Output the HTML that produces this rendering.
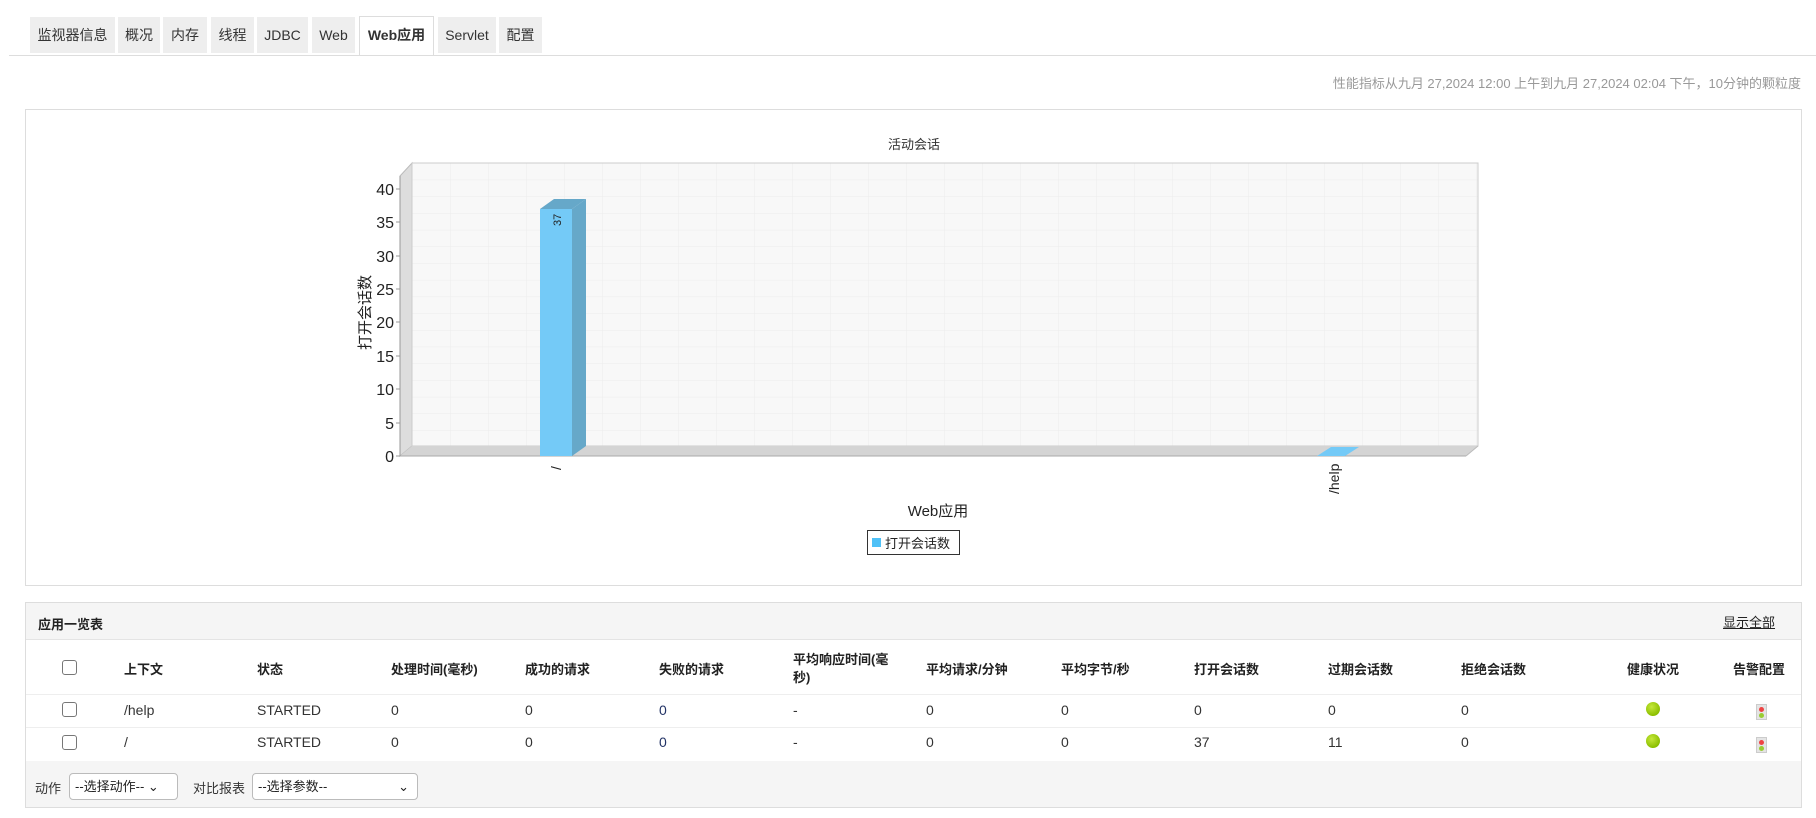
<!DOCTYPE html>
<html><head><meta charset="utf-8"><style>
*{margin:0;padding:0;box-sizing:border-box}
body{width:1816px;height:818px;background:#fff;font-family:"Liberation Sans","Noto Sans CJK SC",sans-serif;color:#333;position:relative;overflow:hidden;font-size:14px}
.a{position:absolute;white-space:nowrap}
.tab{position:absolute;top:17px;height:36px;background:#eee;line-height:36px;text-align:center;font-size:14px;color:#333}
.tab.act{background:#fff;border:1px solid #ddd;border-bottom:none;font-weight:bold;height:39px;top:16px}
.th{font-weight:bold;font-size:13px;color:#222}
.cb{position:absolute;width:15px;height:15px;border:1px solid #777;border-radius:3px;background:#fff}
.sel{position:absolute;height:27px;border:1px solid #bbb;border-radius:4px;background:#fff;font-size:13px;line-height:25px;padding-left:5px;color:#222}
.dot{position:absolute;width:14px;height:14px;border-radius:50%;background:radial-gradient(circle at 40% 35%,#c5e83a,#8cbf00 70%)}
.al{position:absolute;width:11px;height:16px;background:#e4e4e4;border:1px solid #ccc}
.al:before{content:"";position:absolute;left:2px;top:2px;width:5px;height:5px;border-radius:50%;background:#e44}
.al:after{content:"";position:absolute;left:2px;top:8px;width:5px;height:5px;border-radius:50%;background:#9c3}
</style></head><body>
<div class="tab" style="left:30px;width:85px">监视器信息</div>
<div class="tab" style="left:118px;width:42px">概况</div>
<div class="tab" style="left:163px;width:44px">内存</div>
<div class="tab" style="left:211px;width:43px">线程</div>
<div class="tab" style="left:257px;width:51px">JDBC</div>
<div class="tab" style="left:312px;width:43px">Web</div>
<div class="tab act" style="left:359px;width:75px">Web应用</div>
<div class="tab" style="left:438px;width:58px">Servlet</div>
<div class="tab" style="left:499px;width:43px">配置</div>
<div class="a" style="left:9px;top:55px;width:1807px;height:1px;background:#ddd"></div>
<div class="a" style="right:15px;top:73px;font-size:13px;color:#999">性能指标从九月 27,2024 12:00 上午到九月 27,2024 02:04 下午，10分钟的颗粒度</div>

<div class="a" style="left:25px;top:109px;width:1777px;height:477px;border:1px solid #ddd"></div>
<svg class="a" style="left:0;top:0" width="1816" height="600" font-family="Liberation Sans,Noto Sans CJK SC,sans-serif">
<defs><pattern id="g" x="412" y="163" width="38" height="16.7" patternUnits="userSpaceOnUse"><rect width="38" height="16.7" fill="#f8f8f8"/><path d="M0 0H38M0 0V16.7" stroke="#ececec" stroke-width="1"/></pattern></defs>
<text x="914" y="149" font-size="13" text-anchor="middle" fill="#333">活动会话</text>
<polygon points="400,176 412,163 412,446 400,456" fill="#ddd" stroke="#bbb" stroke-width="1"/>
<rect x="412" y="163" width="1066" height="283" fill="url(#g)" stroke="#ccc"/>
<polygon points="400,456 412,446 1478,446 1466,456" fill="#d4d4d4"/>
<line x1="400" y1="456" x2="1466" y2="456" stroke="#aaa"/>
<line x1="1466" y1="456" x2="1478" y2="446" stroke="#bbb"/>
<line x1="400" y1="176" x2="400" y2="456" stroke="#999"/>
<g font-size="16" fill="#222" text-anchor="end">
<text x="394" y="462">0</text><text x="394" y="429">5</text><text x="394" y="395">10</text><text x="394" y="362">15</text><text x="394" y="328">20</text><text x="394" y="295">25</text><text x="394" y="262">30</text><text x="394" y="228">35</text><text x="394" y="195">40</text>
</g>
<g stroke="#999"><line x1="396" y1="456" x2="400" y2="456"/><line x1="396" y1="423" x2="400" y2="423"/><line x1="396" y1="389" x2="400" y2="389"/><line x1="396" y1="356" x2="400" y2="356"/><line x1="396" y1="322" x2="400" y2="322"/><line x1="396" y1="289" x2="400" y2="289"/><line x1="396" y1="256" x2="400" y2="256"/><line x1="396" y1="222" x2="400" y2="222"/><line x1="396" y1="189" x2="400" y2="189"/></g>
<rect x="540" y="209" width="32" height="247" fill="#74caf7"/>
<polygon points="572,209 586,199 586,446 572,456" fill="#66a8c9"/>
<polygon points="540,209 554,199 586,199 572,209" fill="#66a8c9"/>
<text transform="translate(561,226) rotate(-90)" font-size="11" fill="#222">37</text>
<polygon points="1317,456 1331,447 1359,447 1345,456" fill="#74caf7"/>
<text transform="translate(561,470) rotate(-90)" font-size="14" fill="#222">/</text>
<text transform="translate(1339,494) rotate(-90)" font-size="14" fill="#222">/help</text>
<text transform="translate(370,350) rotate(-90)" font-size="15" fill="#222">打开会话数</text>
<text x="938" y="516" font-size="15" text-anchor="middle" fill="#222">Web应用</text>
<rect x="867.5" y="530.5" width="92" height="24" fill="#fff" stroke="#333"/>
<rect x="872" y="538" width="9" height="9" fill="#4fc1f7"/>
<text x="885" y="548" font-size="13" fill="#222">打开会话数</text>
</svg>

<div class="a" style="left:25px;top:602px;width:1777px;height:206px;border:1px solid #ddd"></div>
<div class="a" style="left:26px;top:603px;width:1775px;height:37px;background:#f5f5f5;border-bottom:1px solid #e4e4e4"></div>
<div class="a th" style="left:38px;top:614px">应用一览表</div>
<div class="a" style="left:1723px;top:612px;font-size:13px;text-decoration:underline;color:#222">显示全部</div>
<div class="cb" style="left:62px;top:660px"></div>
<div class="a th" style="left:124px;top:659px">上下文</div>
<div class="a th" style="left:257px;top:659px">状态</div>
<div class="a th" style="left:391px;top:659px">处理时间(毫秒)</div>
<div class="a th" style="left:525px;top:659px">成功的请求</div>
<div class="a th" style="left:659px;top:659px">失败的请求</div>
<div class="a th" style="left:793px;top:651px;white-space:normal;word-break:break-all;width:112px;line-height:18px">平均响应时间(毫秒)</div>
<div class="a th" style="left:926px;top:659px">平均请求/分钟</div>
<div class="a th" style="left:1061px;top:659px">平均字节/秒</div>
<div class="a th" style="left:1194px;top:659px">打开会话数</div>
<div class="a th" style="left:1328px;top:659px">过期会话数</div>
<div class="a th" style="left:1461px;top:659px">拒绝会话数</div>
<div class="a th" style="left:1627px;top:659px">健康状况</div>
<div class="a th" style="left:1733px;top:659px">告警配置</div>
<div class="a" style="left:26px;top:694px;width:1775px;height:1px;background:#eee"></div>
<div class="a" style="left:26px;top:727px;width:1775px;height:1px;background:#eee"></div>

<div class="cb" style="left:62px;top:702px"></div>
<div class="a" style="left:124px;top:702px;font-size:14px">/help</div><div class="a" style="left:257px;top:702px">STARTED</div><div class="a" style="left:391px;top:702px">0</div><div class="a" style="left:525px;top:702px">0</div><div class="a" style="left:659px;top:702px;color:#236">0</div><div class="a" style="left:793px;top:702px">-</div><div class="a" style="left:926px;top:702px">0</div><div class="a" style="left:1061px;top:702px">0</div><div class="a" style="left:1194px;top:702px">0</div><div class="a" style="left:1328px;top:702px">0</div><div class="a" style="left:1461px;top:702px">0</div>
<div class="dot" style="left:1646px;top:702px"></div><div class="al" style="left:1756px;top:704px"></div>

<div class="cb" style="left:62px;top:735px"></div>
<div class="a" style="left:124px;top:734px">/</div><div class="a" style="left:257px;top:734px">STARTED</div><div class="a" style="left:391px;top:734px">0</div><div class="a" style="left:525px;top:734px">0</div><div class="a" style="left:659px;top:734px;color:#236">0</div><div class="a" style="left:793px;top:734px">-</div><div class="a" style="left:926px;top:734px">0</div><div class="a" style="left:1061px;top:734px">0</div><div class="a" style="left:1194px;top:734px">37</div><div class="a" style="left:1328px;top:734px">11</div><div class="a" style="left:1461px;top:734px">0</div>
<div class="dot" style="left:1646px;top:734px"></div><div class="al" style="left:1756px;top:737px"></div>

<div class="a" style="left:26px;top:761px;width:1775px;height:46px;background:#f5f5f5"></div>
<div class="a" style="left:35px;top:778px;font-size:13px">动作</div>
<div class="sel" style="left:69px;top:773px;width:109px">--选择动作-- ⌄</div>
<div class="a" style="left:193px;top:778px;font-size:13px">对比报表</div>
<div class="sel" style="left:252px;top:773px;width:166px">--选择参数--<span style="position:absolute;right:8px">⌄</span></div>
</body></html>
